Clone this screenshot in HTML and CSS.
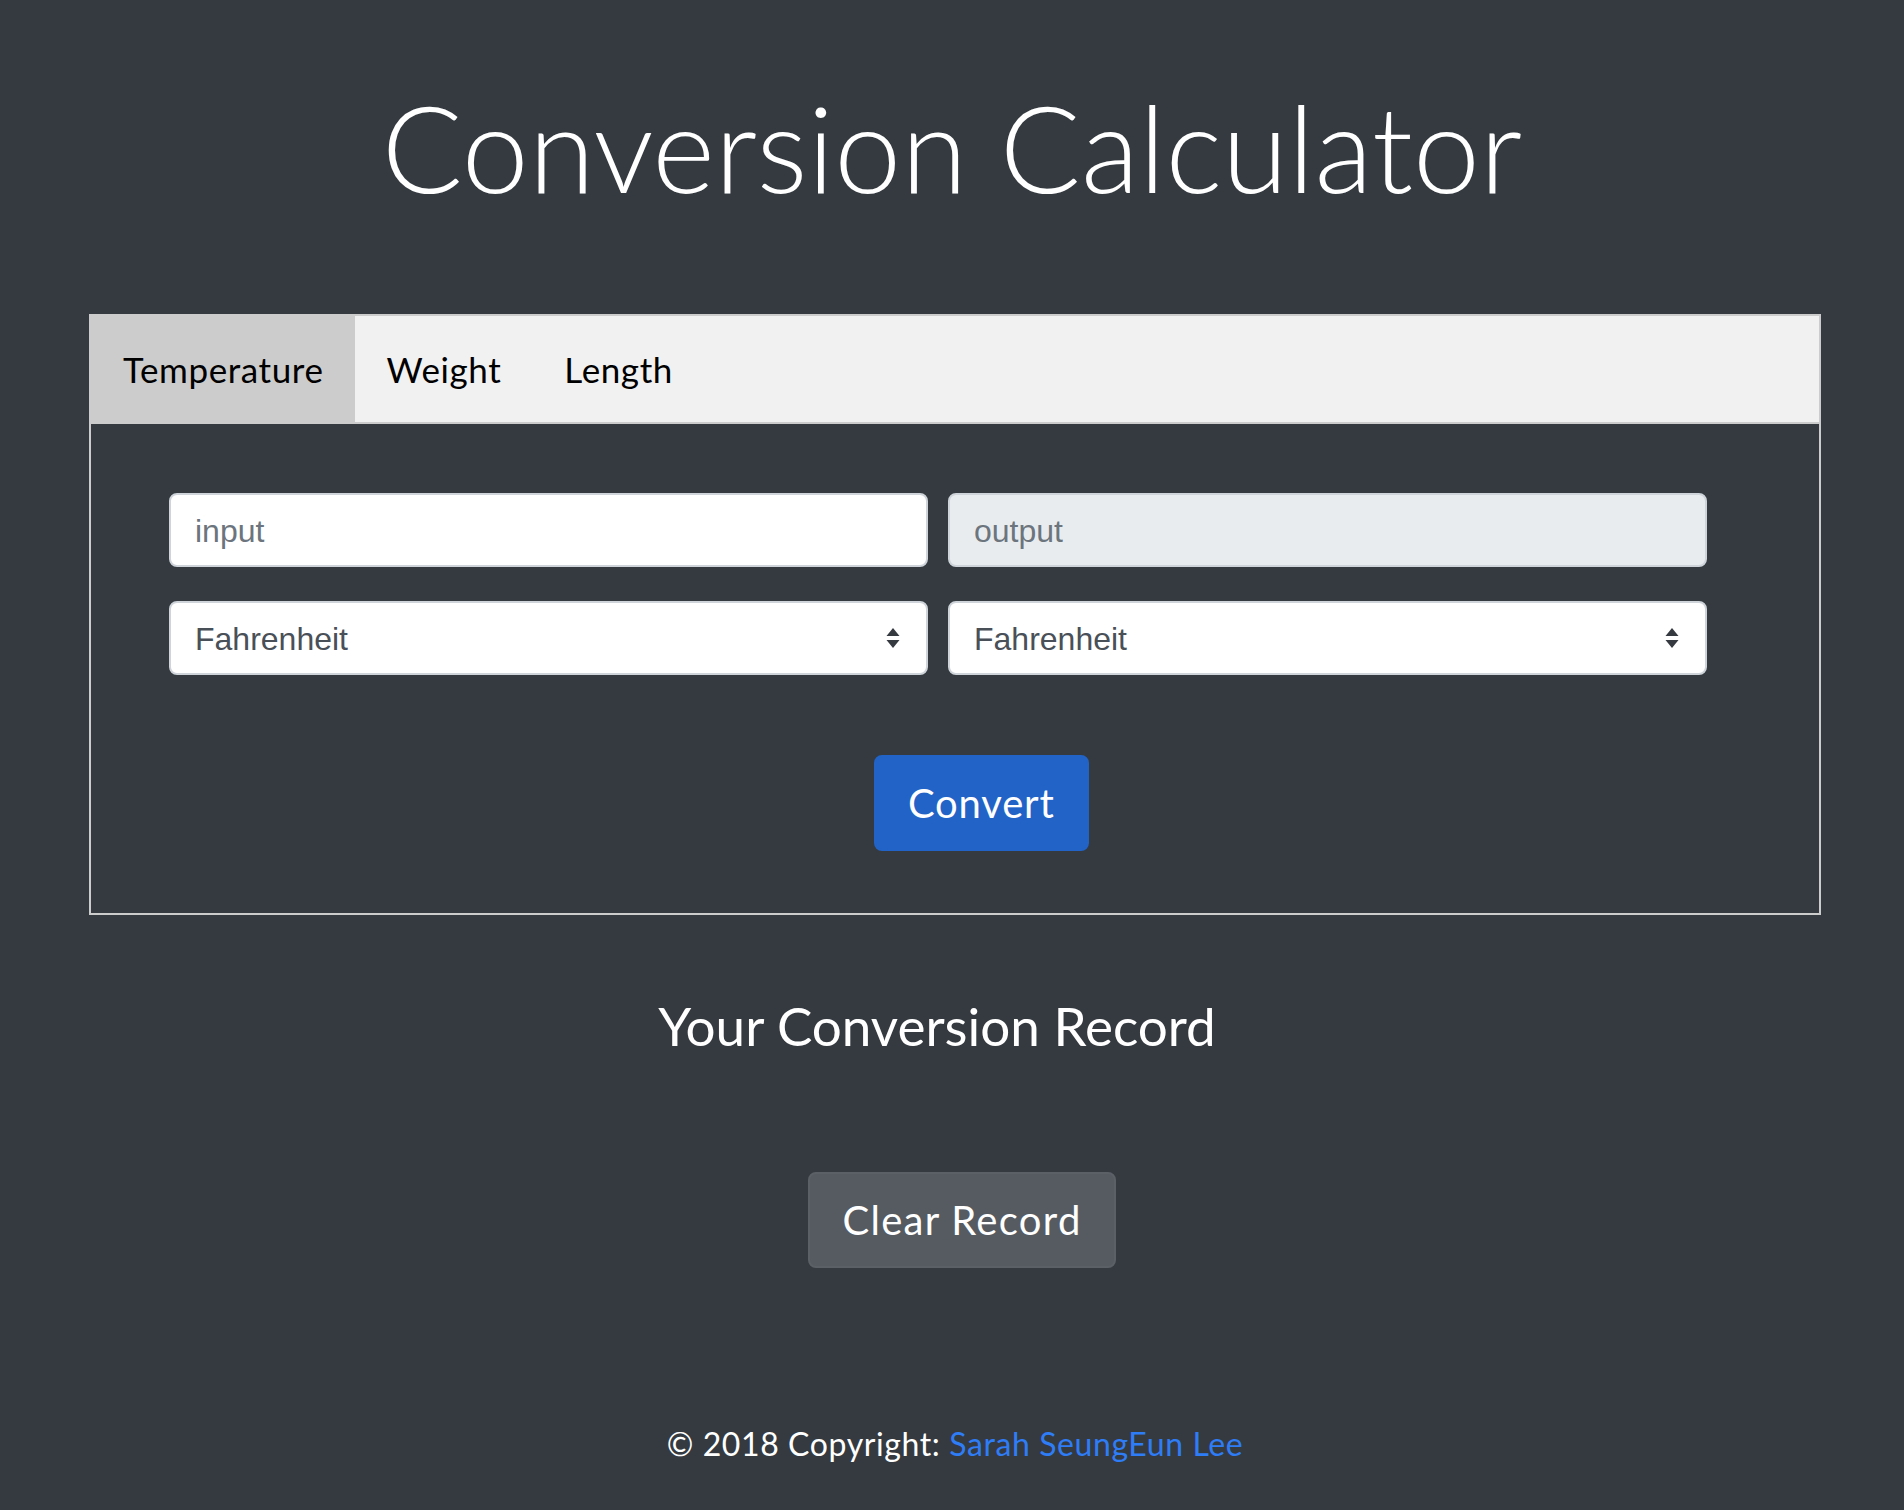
FILE: index.html
```html
<!DOCTYPE html>
<html lang="en">
<head>
<meta charset="utf-8">
<title>Conversion Calculator</title>
<link rel="stylesheet" href="styles.css">
</head>
<body>
  <h1 class="title">Conversion Calculator</h1>

  <section class="card">
    <div class="tabs">
      <button class="tab active">Temperature</button>
      <button class="tab">Weight</button>
      <button class="tab">Length</button>
    </div>
    <div class="tab-content">
      <div class="form-grid">
        <div class="field"><span class="placeholder">input</span></div>
        <div class="field readonly"><span class="placeholder">output</span></div>
        <div class="field select">
          <span class="value">Fahrenheit</span>
          <svg class="caret" width="14" height="22" viewBox="0 0 14 22"><path d="M7 1 L13.5 9 L0.5 9 Z" fill="#343a40"/><path d="M0.5 13 L13.5 13 L7 21 Z" fill="#343a40"/></svg>
        </div>
        <div class="field select">
          <span class="value">Fahrenheit</span>
          <svg class="caret" width="14" height="22" viewBox="0 0 14 22"><path d="M7 1 L13.5 9 L0.5 9 Z" fill="#343a40"/><path d="M0.5 13 L13.5 13 L7 21 Z" fill="#343a40"/></svg>
        </div>
      </div>
      <div class="convert-row">
        <button class="btn btn-primary">Convert</button>
      </div>
    </div>
  </section>

  <h3 class="record-title">Your Conversion Record</h3>

  <div class="clear-row">
    <button class="btn btn-secondary">Clear Record</button>
  </div>

  <footer class="footer">© 2018 Copyright: <a href="#">Sarah SeungEun Lee</a></footer>
</body>
</html>
```

FILE: styles.css
```css
html, body {
  margin: 0;
  padding: 0;
}

body {
  background: #343a40;
  color: #ffffff;
  font-family: "Lato", "Open Sans", sans-serif;
  min-height: 1510px;
}

.title {
  margin: 75px 0 0 0;
  font-size: 120px;
  line-height: 1.2;
  font-weight: 300;
  text-align: center;
}

.card {
  margin: 95px 83px 0 89px;
}

.tabs {
  display: flex;
  background: #f1f1f1;
  border: 2px solid #cccccc;
}

.tab {
  font-family: "Lato", "Open Sans", sans-serif;
  font-size: 35px;
  letter-spacing: 0.6px;
  line-height: 50px;
  padding: 28px 31px 28px 32px;
  border: none;
  background: transparent;
  color: #000;
  margin: 0;
}

.tab.active {
  background: #cccccc;
}

.tab-content {
  border: 2px solid #cccccc;
  border-top: none;
  padding: 69px 112px 62px 78px;
}

.form-grid {
  display: grid;
  grid-template-columns: 1fr 1fr;
  column-gap: 20px;
  row-gap: 34px;
}

.field {
  box-sizing: border-box;
  height: 74px;
  background: #ffffff;
  border: 2px solid #ced4da;
  border-radius: 8px;
  padding: 3px 24px 0 24px;
  display: flex;
  align-items: center;
  font-family: "Liberation Sans", Arial, sans-serif;
  font-size: 32px;
}

.field.readonly {
  background: #e9ecef;
}

.placeholder {
  color: #6c757d;
}

.value {
  color: #495057;
  flex: 1;
}

.select {
  padding-right: 26px;
}

.caret {
  display: block;
  margin-top: -3px;
}

.convert-row {
  margin-top: 80px;
  padding-left: 705px;
}

.btn {
  font-family: "Lato", "Open Sans", sans-serif;
  font-size: 40px;
  letter-spacing: 0.8px;
  line-height: 60px;
  padding: 16px 32px;
  border-radius: 8px;
  color: #ffffff;
  cursor: pointer;
}

.btn-primary {
  background: #2263c7;
  border: 2px solid #2263c7;
}

.btn-secondary {
  background: #565b62;
  border: 2px solid #5b6067;
  letter-spacing: 1.3px;
}

.record-title {
  margin: 79px 0 0 0;
  font-size: 53px;
  line-height: 1.2;
  font-weight: 400;
  text-align: center;
  padding-right: 30px;
}

.clear-row {
  margin-top: 114px;
  display: flex;
  justify-content: center;
  padding-left: 20px;
}

.footer {
  margin-top: 152px;
  text-align: center;
  font-size: 32px;
  letter-spacing: 0.6px;
  line-height: 1.5;
  padding-left: 6px;
}

.footer a {
  color: #2f7df6;
  text-decoration: none;
}
```
